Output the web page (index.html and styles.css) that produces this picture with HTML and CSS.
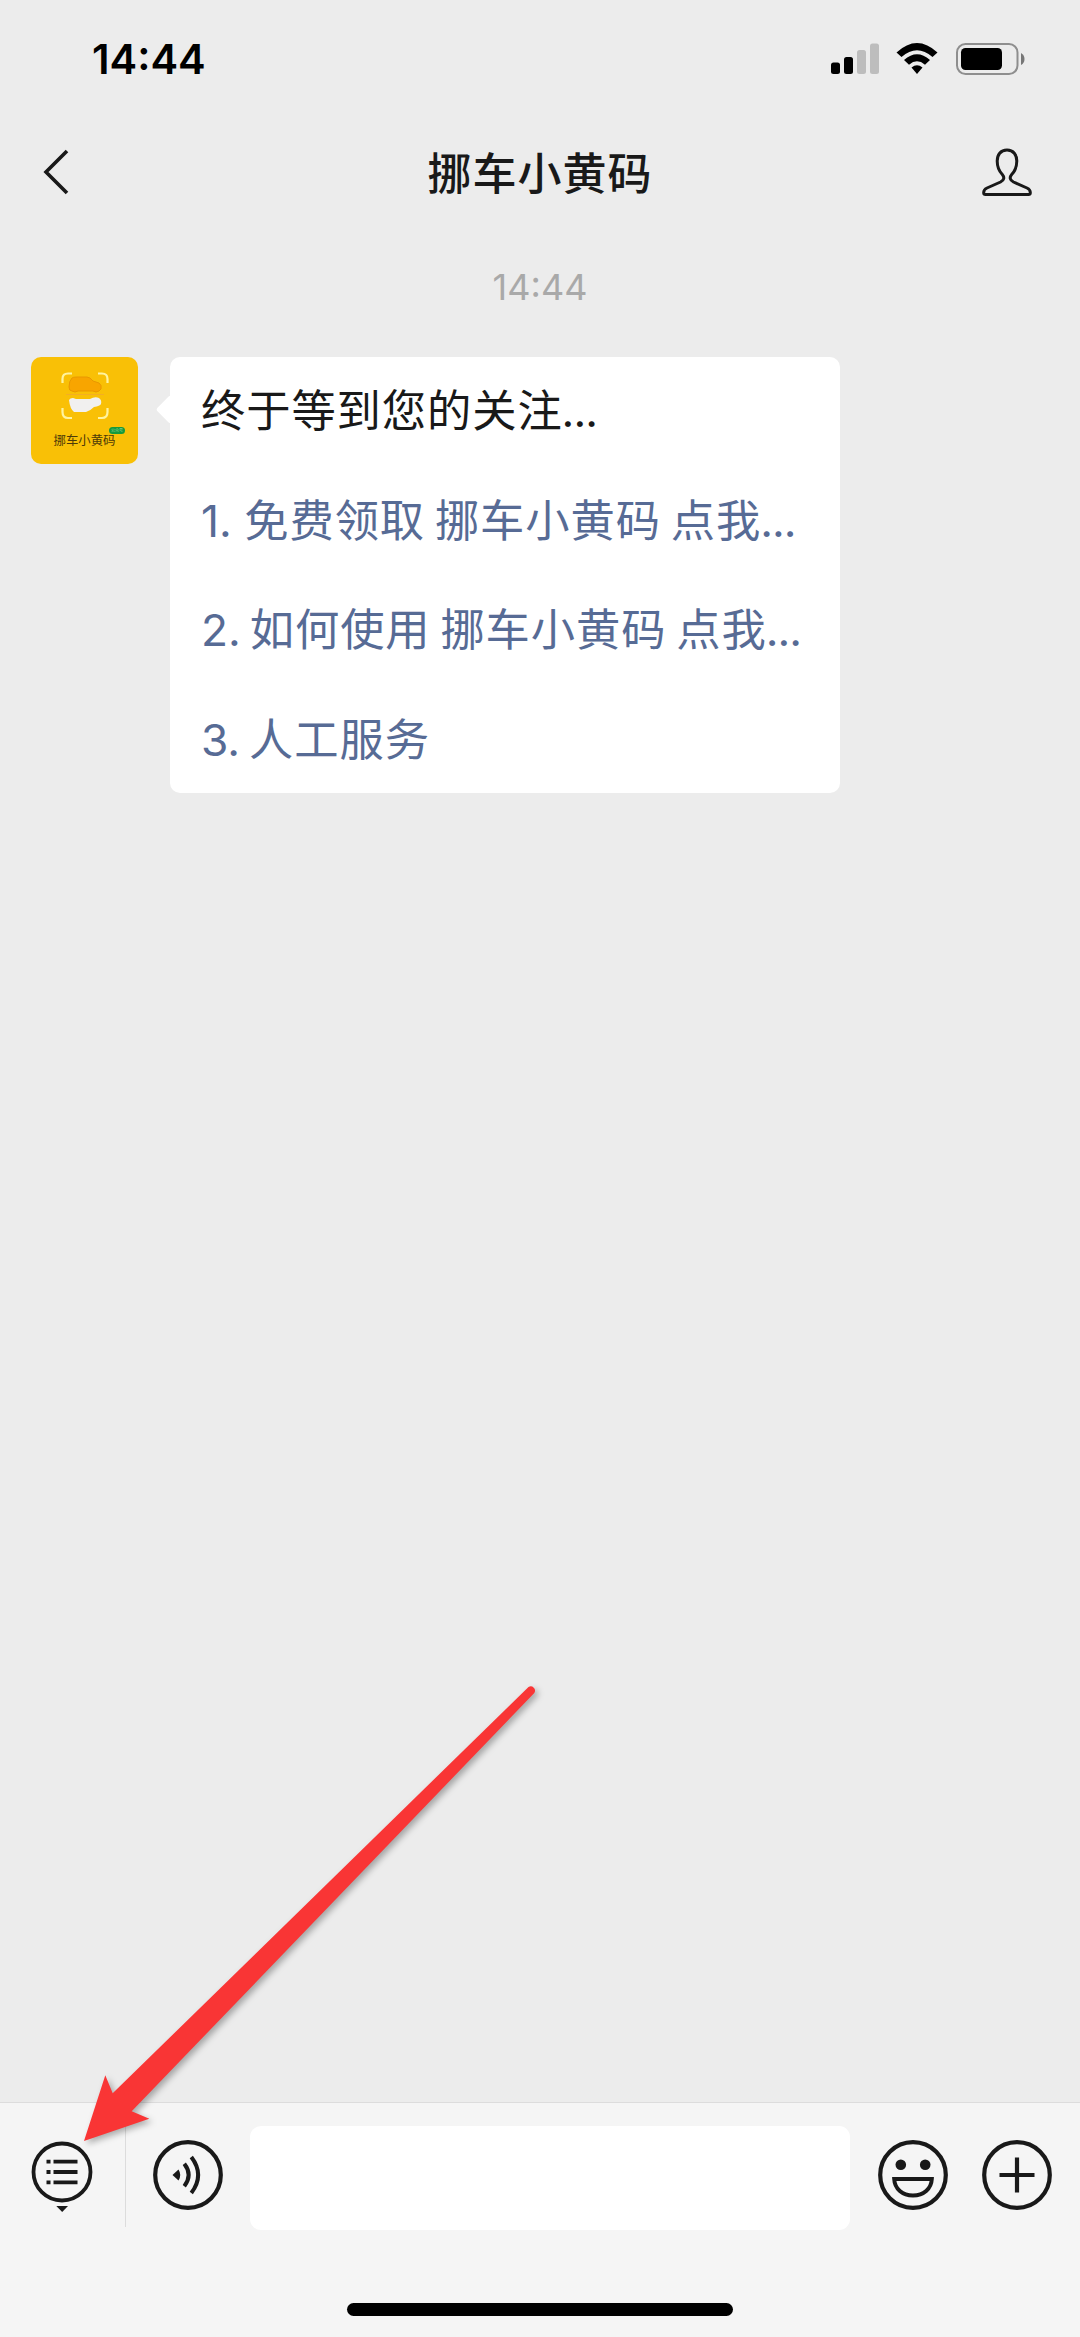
FILE: index.html
```html
<!DOCTYPE html>
<html lang="zh-CN">
<head>
  <meta charset="UTF-8" />
  <meta name="viewport" content="width=device-width, initial-scale=1.0"/>
  <title>挪车小黄码</title>
  <link rel="stylesheet" href="styles.css">
</head>
<body>
  <div class="phone">

    <!-- STATUS BAR -->
    <div class="status-bar">
      <span class="clock">14:44</span>
      <svg class="signal" width="48" height="32" viewBox="0 0 48 32">
        <rect x="0" y="19.5" width="9" height="11.5" rx="2.5"/>
        <rect x="13" y="14" width="9" height="17" rx="2.5"/>
        <rect x="26" y="7" width="9" height="24" rx="2.5" fill="#bdbdbd"/>
        <rect x="39" y="0.5" width="9" height="30.5" rx="2.5" fill="#bdbdbd"/>
      </svg>
      <svg class="wifi" width="42" height="32" viewBox="0 0 42 32">
        <path d="M0.5 9.5 Q21 -9.5 41.5 9.5 L36.5 14 Q21 0.5 5.5 14 Z"/>
        <path d="M8 17 Q21 5.5 34 17 L29 21.7 Q21 15 13 21.7 Z"/>
        <path d="M15.5 24.5 Q21 20 26.5 24.5 L21 31 Z"/>
      </svg>
      <svg class="battery" width="70" height="32" viewBox="0 0 70 32">
        <rect x="1" y="1" width="60.5" height="30" rx="8.5" fill="none" stroke="#8e8e8e" stroke-width="2"/>
        <rect x="5" y="5" width="41" height="22" rx="4.5"/>
        <path d="M65 10 Q68.5 12 68.5 16 Q68.5 20 65 22 Z" fill="#777"/>
      </svg>
    </div>

    <!-- NAV -->
    <div class="nav-bar">
      <svg width="26" height="46" viewBox="0 0 26 46">
        <path d="M24 2 L3 23 L24 44" fill="none" stroke="#191919" stroke-width="3.6"/>
      </svg>
      <h1>挪车小黄码</h1>
      <svg width="50" height="48" viewBox="0 0 50 48">
        <path d="M25 2 C18.5 2 15.2 6.8 15.2 13 C15.2 20 17.5 23.5 20.3 26.5 Q24 31 18.5 34 L5 40 Q1.7 41.5 1.7 44.5 V45 Q1.7 46.5 3.5 46.5 H46.5 Q48.3 46.5 48.3 45 V44.5 Q48.3 41.5 45 40 L31.5 34 Q26 31 29.7 26.5 C32.5 23.5 34.8 20 34.8 13 C34.8 6.8 31.5 2 25 2 Z" fill="none" stroke="#191919" stroke-width="3"/>
      </svg>
    </div>

    <!-- CHAT -->
    <div class="chat">
      <div class="chat-time">14:44</div>
      <div class="message">
        <div class="avatar">
          <svg width="48" height="48" viewBox="0 0 48 48">
            <g fill="none" stroke="#fff3a0" stroke-width="2.2">
              <path d="M1.5 11 V7 Q1.5 1.5 7 1.5 H11"/>
              <path d="M37 1.5 H41 Q46.5 1.5 46.5 7 V11"/>
              <path d="M46.5 36 V40 Q46.5 46 41 46 H37"/>
              <path d="M11 46 H7 Q1.5 46 1.5 40 V36"/>
            </g>
            <path d="M11 6 Q12 5 16 5 H26 Q29 5 32 9 L38 11 Q41 13 40 17 L38 19 Q35 21 32 19 H17 Q14 21 11 19 Q8 19 8 15 Q8 9 11 6 Z" fill="#f8a500" stroke="#e99800" stroke-width="1"/>
            <path d="M5 22.5 H43" stroke="#f3ae25" stroke-width="1.2"/>
            <path d="M8 28 Q9 26 12 26 L15 27 H29 Q34 24 38 26 Q41 28 40 32 Q39 34 33 35 Q29 39 25 40 H13 Q9 37 8 28 Z" fill="#f1f0ef"/>
          </svg>
          <span class="avatar-name">挪车小黄码</span>
          <span class="avatar-tag">公众号</span>
        </div>
        <div class="bubble">
          <p>终于等到您的关注<span class="dots">...</span></p>
          <a><span class="num first">1. </span>免费领取 挪车小黄码 点我<span class="dots">...</span></a>
          <a><span class="num">2. </span>如何使用 挪车小黄码 点我<span class="dots">...</span></a>
          <a><span class="num">3. </span>人工服务</a>
        </div>
      </div>
    </div>

    <!-- INPUT BAR -->
    <div class="footer">
      <div class="toolbar">
        <div class="menu-btn">
          <svg width="62" height="72" viewBox="0 0 62 72">
            <circle cx="31" cy="31" r="28.5" fill="none" stroke="#191919" stroke-width="3.8"/>
            <path d="M15.5 20.7 H19.5 M22.5 20.7 H46.5 M15.5 31 H19.5 M22.5 31 H46.5 M15.5 41.3 H19.5 M22.5 41.3 H46.5" stroke="#191919" stroke-width="3.8"/>
            <path d="M25.3 65 H37 L31.2 71 Z" fill="#191919"/>
          </svg>
        </div>
        <svg class="voice" width="70" height="70" viewBox="0 0 70 70">
          <circle cx="35" cy="35" r="32.8" fill="none" stroke="#191919" stroke-width="4.2"/>
          <path d="M19.5 35 L25.5 29.5 Q29 35 25.5 40.5 Z" fill="#191919"/>
          <path d="M31.3 23.8 Q40 35 31.3 46.2 M38.3 17 Q52 35 38.3 53" fill="none" stroke="#191919" stroke-width="4"/>
        </svg>
        <div class="text-input"></div>
        <svg class="emoji" width="70" height="70" viewBox="0 0 70 70">
          <circle cx="35" cy="35" r="32.8" fill="none" stroke="#191919" stroke-width="4.2"/>
          <circle cx="22.8" cy="24.7" r="5.3" fill="#191919"/>
          <circle cx="47.2" cy="24.7" r="5.3" fill="#191919"/>
          <path d="M16.2 39 H53.8 C53.3 49 45.5 55.5 35 55.5 C24.5 55.5 16.7 49 16.2 39 Z" fill="none" stroke="#191919" stroke-width="4"/>
        </svg>
        <svg class="more" width="70" height="70" viewBox="0 0 70 70">
          <circle cx="35" cy="35" r="32.8" fill="none" stroke="#191919" stroke-width="4.2"/>
          <path d="M17.5 35 H52.5 M35 17.5 V52.5" stroke="#191919" stroke-width="4.2"/>
        </svg>
      </div>
      <div class="home-indicator"></div>
    </div>

    <!-- arrow pointing at the menu button -->
    <svg class="arrow" width="480" height="480" viewBox="70 1675 480 480">
      <path d="M84 2141 L105.3 2075.3 L112.7 2093.3 L528.5 1687 A4.3 4.3 0 0 1 534.3 1693 L131.7 2111.3 L149.3 2118.7 Z" fill="#f93535"/>
    </svg>
  </div>
</body>
</html>
```
FILE: styles.css
```css
* {
  box-sizing: border-box;
}

body {
  margin: 0;
  background: #ececec;
  font-family: Inter, "Noto Sans CJK SC", sans-serif;
  color: #191919;
}

svg {
  display: block;
  flex-shrink: 0;
}

.phone {
  position: relative;
  display: flex;
  flex-direction: column;
  width: 1080px;
  height: 2337px;
  overflow: hidden;
}

.status-bar {
  display: flex;
  height: 112px;
  padding: 43px 54px 0 92px;
}

.clock {
  margin-right: auto;
  font-size: 41.5px;
  font-weight: 600;
  line-height: 32px;
  color: #000;
}

.wifi {
  margin-left: 17px;
}

.battery {
  margin-left: 18px;
}

.nav-bar {
  display: flex;
  align-items: center;
  justify-content: space-between;
  height: 120px;
  padding: 0 48px 0 43px;
}

.nav-bar h1 {
  margin: 0 0 2px 29px;
  font-size: 44px;
  font-weight: 500;
  letter-spacing: 1px;
}

.chat {
  flex: 1;
}

.chat-time {
  height: 125px;
  padding-top: 34px;
  text-align: center;
  font-size: 36px;
  line-height: 42px;
  color: #a9a9a9;
}

.message {
  display: flex;
  align-items: flex-start;
  padding-left: 31px;
}

.avatar {
  position: relative;
  display: flex;
  flex-direction: column;
  align-items: center;
  width: 107px;
  height: 107px;
  padding-top: 15px;
  border-radius: 10px;
  background: #f9c006;
}

.avatar-name {
  margin-top: 13px;
  font-size: 12.4px;
  line-height: 16px;
  color: #4d3a08;
  white-space: nowrap;
}

.avatar-tag {
  position: absolute;
  left: 78px;
  top: 70px;
  width: 16px;
  height: 7px;
  border-radius: 4px;
  background: #159a3c;
  color: #a5dca0;
  font-size: 4px;
  line-height: 7px;
  text-align: center;
}

.bubble {
  position: relative;
  display: flex;
  flex-direction: column;
  gap: 57.6px;
  width: 670px;
  height: 436px;
  margin-left: 32px;
  padding: 28px 31px 0;
  border-radius: 10px;
  background: #fff;
  font-size: 44.3px;
  line-height: 52px;
  letter-spacing: 0.9px;
  word-spacing: -3.5px;
  white-space: nowrap;
}

.bubble::before {
  content: "";
  position: absolute;
  left: -10px;
  top: 42px;
  width: 21px;
  height: 21px;
  border-radius: 3px;
  background: #fff;
  transform: rotate(45deg);
}

.bubble p {
  margin: 0;
}

.bubble a {
  color: #576b95;
}

.num {
  letter-spacing: 0;
}

.num.first {
  margin-right: 3.5px;
}

.dots {
  margin-left: -1px;
  letter-spacing: -0.9px;
}

.footer {
  height: 235px;
  border-top: 1px solid #dcdcdc;
  background: #f5f5f5;
}

.toolbar {
  display: flex;
  align-items: flex-start;
  padding: 23px 28px 0 0;
}

.menu-btn {
  width: 126px;
  height: 124px;
  margin-top: -23px;
  padding: 38px 0 0 31px;
  border-right: 1px solid #dcdcdc;
}

.voice {
  margin: 14px 27px 0;
}

.text-input {
  flex: 1;
  height: 104px;
  border-radius: 11px;
  background: #fff;
}

.emoji {
  margin: 14px 34px 0 28px;
}

.more {
  margin-top: 14px;
}

.home-indicator {
  width: 386px;
  height: 13px;
  margin: 73px auto 0;
  border-radius: 7px;
  background: #000;
}

.arrow {
  position: absolute;
  left: 70px;
  top: 1675px;
  filter: drop-shadow(3px 3px 3px rgba(0, 0, 0, 0.3));
}
```
